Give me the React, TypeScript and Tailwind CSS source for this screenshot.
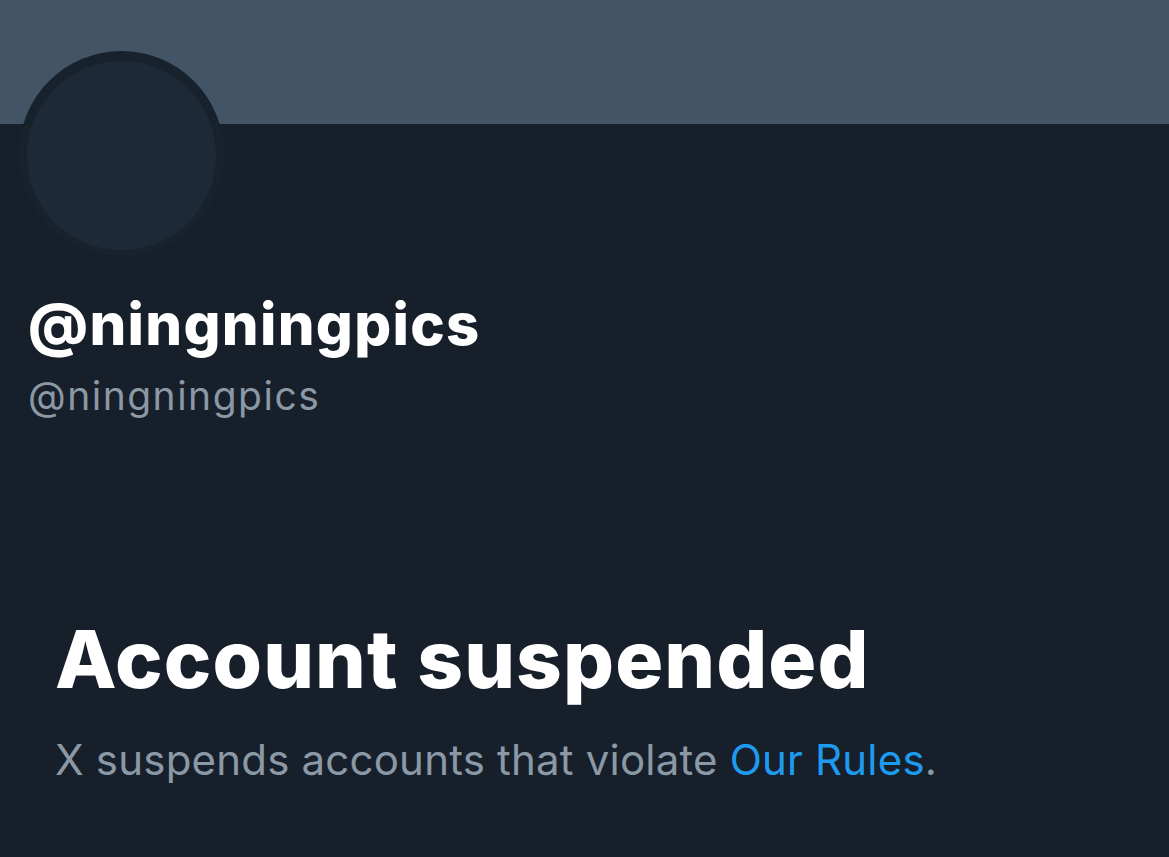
import React from "react";

export default function App() {
  return (
    <div
      className="w-[1169px] h-[857px] bg-[#17202a] overflow-hidden"
      style={{ fontFamily: "Inter, 'Noto Sans', sans-serif" }}
    >
      <div className="h-[124px] bg-[#425466]" />
      <div className="relative h-[166px]">
        <div className="absolute left-[19px] top-[-73px] w-[205px] h-[205px] rounded-full bg-[#18222d] flex items-center justify-center">
          <div className="w-[189px] h-[189px] mt-[4px] rounded-full bg-[#1e2938]" />
        </div>
      </div>
      <div className="pl-[28px]">
        <div className="text-[58px] leading-[68px] font-extrabold text-white tracking-[1.3px]">
          @ningningpics
        </div>
        <div className="text-[39px] leading-[48px] text-[#8b98a5] mt-[14px] tracking-[1.5px]">
          @ningningpics
        </div>
      </div>
      <div className="pl-[55px] mt-[191px]">
        <div className="text-[80px] leading-[96px] font-extrabold text-white tracking-[1.1px]">
          Account suspended
        </div>
        <div className="text-[42px] leading-[52px] text-[#8b98a5] mt-[27px] tracking-[0.2px]">
          X suspends accounts that violate <span className="text-[#1d9bf0]">Our Rules</span>.
        </div>
      </div>
    </div>
  );
}
